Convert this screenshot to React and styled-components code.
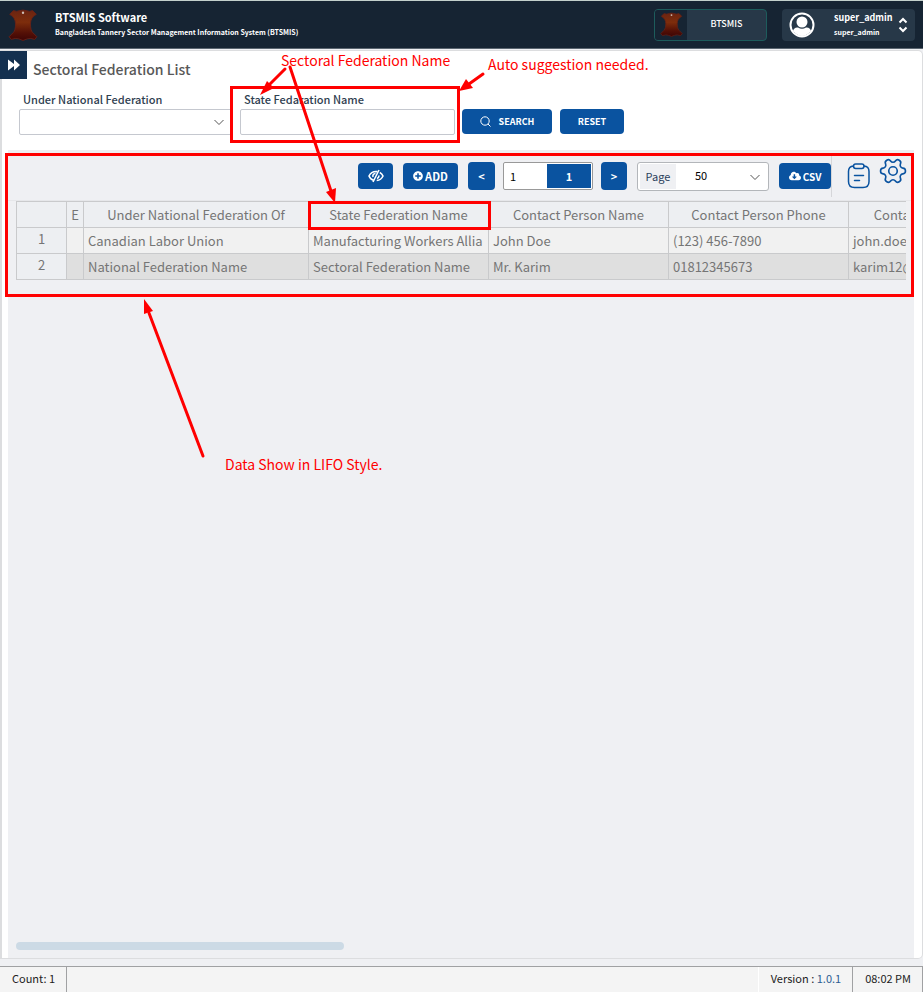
import React from "react";
import styled, { createGlobalStyle } from "styled-components";
import { FaPlusCircle, FaCloudDownloadAlt } from "react-icons/fa";

const BLUE = "#0a53a0";
const RED = "#ff0000";
const SANS = '"Noto Sans CJK SC", "Noto Sans", sans-serif';

const GlobalStyle = createGlobalStyle`
  * { box-sizing: border-box; }
  html, body, #root { height: 100%; }
  body { margin: 0; background: #eff0f3; font-family: ${SANS}; font-size: 12px; line-height: 16px; }
  button, input, select { font-family: inherit; margin: 0; }
`;

const Page = styled.div`
  position: relative;
  display: flex;
  flex-direction: column;
  min-height: 100vh;
  overflow: hidden;
`;

const Header = styled.header`
  display: flex;
  align-items: center;
  height: 49px;
  padding: 0 8px;
  background: #162433;
  border-top: 1px solid #c3d0cc;
  border-bottom: 1px solid #5b6671;
  color: #fff;
`;

const Brand = styled.div`
  display: flex;
  align-items: center;
  gap: 17px;
  flex: 1;
`;

const BrandText = styled.div`
  display: flex;
  flex-direction: column;
  padding-bottom: 2px;
`;

const BrandName = styled.strong`
  font-size: 11px;
  line-height: 16px;
  font-weight: 700;
`;

const BrandNote = styled.span`
  font-size: 7px;
  line-height: 14px;
  font-weight: 700;
`;

const ModuleButton = styled.button`
  display: flex;
  align-items: center;
  width: 113px;
  height: 32px;
  padding: 0;
  border: 1px solid #1d5c5c;
  border-radius: 4px;
  background: #273848;
  color: #fff;
  overflow: hidden;
  font-size: 9px;
  font-weight: 500;
`;

const ModuleIcon = styled.span`
  display: flex;
  align-items: center;
  justify-content: center;
  width: 32px;
  height: 100%;
  background: #162433;
`;

const ModuleName = styled.span`
  flex: 1;
  padding-bottom: 2px;
`;

const UserButton = styled.button`
  display: flex;
  align-items: center;
  width: 133px;
  height: 32px;
  margin-left: 15px;
  padding: 0 7px;
  border: 0;
  border-radius: 4px;
  background: #273848;
  color: #fff;
  text-align: left;
`;

const UserNames = styled.span`
  display: flex;
  flex-direction: column;
  flex: 1;
  margin-left: 19px;
  font-weight: 700;
`;

const UserName = styled.span`
  font-size: 9px;
  line-height: 14px;
`;

const UserRole = styled.span`
  font-size: 7px;
  line-height: 14px;
`;

const Panel = styled.main`
  display: flex;
  flex-direction: column;
  flex: 1;
  margin-top: 1px;
  padding: 0 8px 0 6px;
  border: 1px solid #dcdddf;
  border-left-width: 2px;
  border-radius: 0 5px 5px 0;
  background: #fff;
`;

const TitleRow = styled.div`
  display: flex;
  height: 37px;
  margin-left: -8px;
`;

const MenuToggle = styled.button`
  display: flex;
  align-items: center;
  justify-content: center;
  width: 27px;
  height: 28px;
  padding: 0;
  border: 0;
  background: #14304f;
  color: #fff;
`;

const Title = styled.h1`
  margin: 8px 0 0 6px;
  color: #585858;
  font-size: 14px;
  line-height: 20px;
  font-weight: 500;
`;

const Filters = styled.form`
  display: flex;
  align-items: flex-start;
  height: 62px;
  padding: 3px 0 0 11px;
`;

const Field = styled.div`
  position: relative;
  display: flex;
  flex-direction: column;
  width: ${(p) => p.$width};
  margin-right: ${(p) => p.$gap};
`;

const Label = styled.label`
  padding-left: 4px;
  color: #2f4050;
  font-size: 11px;
  line-height: 16px;
  font-weight: 500;
`;

const controlBox = `
  width: 100%;
  height: 26px;
  margin-top: 2px;
  border: 1px solid #c5c8cf;
  border-radius: 2px;
  background: #fff;
`;

const FilterSelect = styled.select`
  ${controlBox}
  appearance: none;
`;

const FilterInput = styled.input`
  ${controlBox}
`;

const SelectChevron = styled.span`
  position: absolute;
  right: 7px;
  bottom: 8px;
  display: flex;
  pointer-events: none;
`;

const FilterButton = styled.button`
  display: flex;
  align-items: center;
  justify-content: center;
  gap: 8px;
  width: ${(p) => p.$width};
  height: 25px;
  margin: 18px 8px 0 0;
  padding: 0;
  border: 0;
  border-radius: 4px;
  background: ${BLUE};
  color: #fff;
  font-size: 9px;
  font-weight: 700;
`;

const Workspace = styled.section`
  display: flex;
  flex-direction: column;
  flex: 1;
  background: #eff0f3;
`;

const Toolbar = styled.div`
  display: flex;
  align-items: center;
  justify-content: flex-end;
  height: 51px;
  padding: 2px 6px 0 0;
  border-bottom: 1px solid #e6e7ea;
`;

const ToolButton = styled.button`
  display: flex;
  align-items: center;
  justify-content: center;
  gap: 2px;
  width: ${(p) => p.$width};
  height: ${(p) => p.$height || "26px"};
  margin-right: ${(p) => p.$gap};
  padding: 0;
  border: 0;
  border-radius: 4px;
  background: ${BLUE};
  color: #fff;
  font-size: ${(p) => p.$size || "11px"};
  font-weight: 700;
`;

const Pager = styled.div`
  display: flex;
  width: 90px;
  height: 28px;
  margin-right: 8px;
  padding: 1px;
  border: 1px solid #999;
  border-radius: 2px;
  background: #fff;
`;

const PageInput = styled.input`
  width: 42px;
  padding: 0 5px;
  border: 0;
  background: #fff;
  font-size: 11px;
`;

const PageTotal = styled.span`
  flex: 1;
  background: ${BLUE};
  color: #fff;
  font-size: 11px;
  line-height: 24px;
  font-weight: 700;
  text-align: center;
`;

const PageSize = styled.div`
  position: relative;
  display: flex;
  width: 132px;
  height: 29px;
  margin-right: 10px;
  padding: 1px 2px;
  border: 1px solid #b3b6ba;
  border-radius: 3px;
  background: #fff;
`;

const PageSizeLabel = styled.label`
  width: 36px;
  background: #eff0f3;
  color: #2b3f5c;
  font-size: 11px;
  line-height: 24px;
  text-align: center;
`;

const PageSizeSelect = styled.select`
  flex: 1;
  padding: 0 0 2px 19px;
  border: 0;
  background: transparent;
  appearance: none;
  color: #000;
  font-size: 11px;
`;

const IconGroup = styled.div`
  display: flex;
  gap: 7px;
  height: 41px;
  padding-left: 15px;
  border-left: 1px solid #d5d6d9;
`;

const IconButton = styled.button`
  display: flex;
  align-self: ${(p) => p.$align};
  padding: 0;
  border: 0;
  background: none;
`;

const TableArea = styled.div`
  flex: 1;
  margin: 0 8px;
  overflow: hidden;
`;

const Table = styled.table`
  width: 1013px;
  border-collapse: collapse;
  table-layout: fixed;
  color: #757575;
  font-size: 13px;
`;

const Col = styled.col`
  width: ${(p) => p.$width};
`;

const HeadCell = styled.th`
  height: 26px;
  padding: 0;
  border: 1px solid #c9cacc;
  background: #edeff2;
  font-weight: 400;
  line-height: 20px;
  white-space: nowrap;
`;

const RowNumber = styled(HeadCell)`
  padding: 0 0 3px;
`;

const Cell = styled.td`
  height: 26px;
  padding: 0 0 0 4px;
  border: 1px solid #c9cacc;
  background: ${(p) => (p.$shaded ? "#dfdfdf" : "#f1f1f1")};
  line-height: 20px;
  white-space: nowrap;
  overflow: hidden;
`;

const ScrollThumb = styled.div`
  width: 37%;
  max-width: 328px;
  height: 8px;
  margin: 0 8px 8px;
  border-radius: 4px;
  background: #ccdae5;
`;

const Footer = styled.footer`
  display: flex;
  height: 26px;
  margin-top: 7px;
  border-top: 1px solid #a0a1a3;
  background: #f4f4f4;
  color: #222;
  font-size: 11px;
  line-height: 23px;
`;

const FooterItem = styled.div`
  padding: 0 11px 0 12px;
  border-right: 1px solid #a0a1a3;
`;

const FooterSpace = styled.div`
  flex: 1;
  border-right: 1px solid #fff;
`;

const VersionLink = styled.a`
  color: #2c5c92;
  text-decoration: none;
`;

const Mark = styled.div`
  position: absolute;
  left: ${(p) => p.$left};
  top: ${(p) => p.$top};
  right: ${(p) => p.$right || "auto"};
  width: ${(p) => p.$width || "auto"};
  height: ${(p) => p.$height};
  border: 3px solid ${RED};
  pointer-events: none;
`;

const Note = styled.div`
  position: absolute;
  left: ${(p) => p.$left};
  top: ${(p) => p.$top};
  color: ${RED};
  font-size: 14px;
  line-height: 18px;
  white-space: nowrap;
  pointer-events: none;
`;

const Arrows = styled.svg`
  position: absolute;
  left: 0;
  top: 0;
  pointer-events: none;
`;

function Hide({ width, height }) {
  return (
    <svg width={width} height={height} viewBox="0 0 28 30" aria-hidden="true">
      <defs>
        <linearGradient id="hide" x1="0" y1="0" x2="0" y2="1">
          <stop offset="0" stopColor="#6b2411" />
          <stop offset="0.4" stopColor="#7d2d0c" />
          <stop offset="0.75" stopColor="#541006" />
          <stop offset="1" stopColor="#3d0505" />
        </linearGradient>
      </defs>
      <path
        d="M5 1.500 Q8 3 11 1.500 L14 1 L17 1.500 Q20 3 23 1.500 L26.500 5 Q21 8 21 14 Q21 20 23 22 L27 26 L25 28.500 Q21 27 18 28 L14 29.500 L10 28 Q7 27 3 28.500 L1 26 L5 22 Q7 20 7 14 Q7 8 1.500 5 Z"
        fill="url(#hide)" stroke="#6a2116" strokeWidth="0.800" strokeLinejoin="round"
      />
      <circle cx="14" cy="3.500" r="1.100" fill="#cdbdb6" />
    </svg>
  );
}

function DoubleArrow() {
  return (
    <svg width="14" height="12" viewBox="0 0 14 12" fill="currentColor" aria-hidden="true">
      <path d="M1 0.500 7 5V0.500L13 6 7 11.500V7L1 11.500Z" />
    </svg>
  );
}

function Chevron() {
  return (
    <svg width="12" height="10" viewBox="0 0 12 10" fill="none" stroke="#555" aria-hidden="true">
      <path d="M1.500 3 6 7.500 10.500 3" />
    </svg>
  );
}

function Avatar() {
  return (
    <svg width="26" height="26" viewBox="0 0 26 26" aria-hidden="true">
      <circle cx="13" cy="13" r="11.500" fill="#273848" stroke="#fff" strokeWidth="2" />
      <circle cx="13" cy="10" r="5.500" fill="#fff" />
      <path d="M4 19 Q5 15 9 15.500 Q13 18 17 15.500 Q21 15 22 19 Q13 29 4 19Z" fill="#fff" />
    </svg>
  );
}

function UpDown() {
  return (
    <svg width="10" height="16" viewBox="0 0 10 16" fill="none" stroke="#fff" strokeWidth="2" aria-hidden="true">
      <path d="M1.500 5.500 5 2 8.500 5.500M1.500 10.500 5 14 8.500 10.500" />
    </svg>
  );
}

function Magnifier() {
  return (
    <svg width="11" height="11" viewBox="0 0 11 11" fill="none" stroke="#fff" aria-hidden="true">
      <circle cx="5" cy="5" r="4.200" />
      <path d="M8 8 10.500 10.500" />
    </svg>
  );
}

function EyeOff() {
  return (
    <svg width="16" height="14" viewBox="0 0 16 14" fill="none" stroke="#fff" strokeWidth="1.600" aria-hidden="true">
      <path d="M6 11.500C3.500 10.800 1.800 9 1 7 2.500 4 5 2.500 8 2.500L9.500 2.600M11.800 3.500C13.300 4.300 14.400 5.600 15 7 13.800 9.700 11.500 11.300 8.700 11.500" />
      <path d="M11 1 5 13" />
      <path d="M7.500 4.500C5.500 4.700 4.500 6 5 8M11 6.500C11 8 10.300 9 9 9.500" />
    </svg>
  );
}

function ClipboardIcon() {
  return (
    <svg width="24" height="26" viewBox="0 0 24 26" fill="none" stroke={BLUE} strokeWidth="1.500" strokeLinecap="round" aria-hidden="true">
      <path d="M6.500 3C3 3.300 1.500 5 1.500 8.500V18.500C1.500 22.500 3.200 24.500 7.500 24.500H16C20.300 24.500 22 22.500 22 18.500V8.500C22 5 20.500 3.300 17 3" />
      <rect x="6.500" y="1" width="10.500" height="4.500" rx="2.200" />
      <path d="M7.500 12.500H16.500M7.500 17.500H12.500" />
    </svg>
  );
}

function GearIcon() {
  return (
    <svg width="30" height="30" viewBox="0 0 24 24" fill="none" stroke={BLUE} strokeWidth="1.300" strokeLinejoin="round" aria-hidden="true">
      <g transform="rotate(30 12 12)">
        <path d="M9.671 4.136a2.340 2.340 0 0 1 4.659 0 2.340 2.340 0 0 0 3.319 1.915 2.340 2.340 0 0 1 2.330 4.033 2.340 2.340 0 0 0 0 3.831 2.340 2.340 0 0 1-2.330 4.033 2.340 2.340 0 0 0-3.319 1.915 2.340 2.340 0 0 1-4.659 0 2.340 2.340 0 0 0-3.320-1.915 2.340 2.340 0 0 1-2.330-4.033 2.340 2.340 0 0 0 0-3.831A2.340 2.340 0 0 1 6.350 6.051a2.340 2.340 0 0 0 3.319-1.915" />
      </g>
      <circle cx="12" cy="12" r="3.400" />
    </svg>
  );
}

const columns = [
  { name: "", width: "50px" },
  { name: "E", width: "17px" },
  { name: "Under National Federation Of", width: "225px" },
  { name: "State Federation Name", width: "180px" },
  { name: "Contact Person Name", width: "180px" },
  { name: "Contact Person Phone", width: "180px" },
  { name: "Contact Person Email", width: "180px" },
];

const rows = [
  ["", "Canadian Labor Union", "Manufacturing Workers Allia", "John Doe", "(123) 456-7890", "john.doe@example.com"],
  ["", "National Federation Name", "Sectoral Federation Name", "Mr. Karim", "01812345673", "karim12@gmail.com"],
];

export default function App() {
  return (
    <Page>
      <GlobalStyle />
      <Header>
        <Brand>
          <Hide width={30} height={32} />
          <BrandText>
            <BrandName>BTSMIS Software</BrandName>
            <BrandNote>Bangladesh Tannery Sector Management Information System (BTSMIS)</BrandNote>
          </BrandText>
        </Brand>
        <ModuleButton type="button">
          <ModuleIcon><Hide width={23} height={25} /></ModuleIcon>
          <ModuleName>BTSMIS</ModuleName>
        </ModuleButton>
        <UserButton type="button">
          <Avatar />
          <UserNames>
            <UserName>super_admin</UserName>
            <UserRole>super_admin</UserRole>
          </UserNames>
          <UpDown />
        </UserButton>
      </Header>

      <Panel>
        <TitleRow>
          <MenuToggle type="button" aria-label="Open menu"><DoubleArrow /></MenuToggle>
          <Title>Sectoral Federation List</Title>
        </TitleRow>
        <Filters onSubmit={(e) => e.preventDefault()}>
          <Field $width="213px" $gap="8px">
            <Label htmlFor="national">Under National Federation</Label>
            <FilterSelect id="national" />
            <SelectChevron><Chevron /></SelectChevron>
          </Field>
          <Field $width="215px" $gap="7px">
            <Label htmlFor="state">State Fedaration Name</Label>
            <FilterInput id="state" type="text" />
          </Field>
          <FilterButton type="submit" $width="90px"><Magnifier />SEARCH</FilterButton>
          <FilterButton type="reset" $width="64px">RESET</FilterButton>
        </Filters>

        <Workspace>
          <Toolbar>
            <ToolButton type="button" $width="35px" $gap="10px" aria-label="Toggle columns"><EyeOff /></ToolButton>
            <ToolButton type="button" $width="55px" $gap="10px"><FaPlusCircle size={10} />ADD</ToolButton>
            <ToolButton type="button" $width="27px" $height="28px" $gap="8px">&lt;</ToolButton>
            <Pager>
              <PageInput type="text" defaultValue="1" aria-label="Page number" />
              <PageTotal>1</PageTotal>
            </Pager>
            <ToolButton type="button" $width="26px" $height="28px" $gap="10px">&gt;</ToolButton>
            <PageSize>
              <PageSizeLabel htmlFor="page-size">Page</PageSizeLabel>
              <PageSizeSelect id="page-size" defaultValue="50">
                <option>50</option>
                <option>100</option>
              </PageSizeSelect>
              <SelectChevron><Chevron /></SelectChevron>
            </PageSize>
            <ToolButton type="button" $width="52px" $gap="0px" $size="10px"><FaCloudDownloadAlt size={12} />CSV</ToolButton>
            <IconGroup>
              <IconButton type="button" $align="center" aria-label="Report"><ClipboardIcon /></IconButton>
              <IconButton type="button" $align="flex-start" aria-label="Settings"><GearIcon /></IconButton>
            </IconGroup>
          </Toolbar>
          <TableArea>
            <Table>
              <colgroup>
                {columns.map((c) => <Col key={c.name} $width={c.width} />)}
              </colgroup>
              <thead>
                <tr>{columns.map((c) => <HeadCell key={c.name} scope="col">{c.name}</HeadCell>)}</tr>
              </thead>
              <tbody>
                {rows.map((row, i) => (
                  <tr key={row[1]}>
                    <RowNumber scope="row">{i + 1}</RowNumber>
                    {row.map((text, j) => <Cell key={j} $shaded={i % 2 === 1}>{text}</Cell>)}
                  </tr>
                ))}
              </tbody>
            </Table>
          </TableArea>
          <ScrollThumb />
        </Workspace>
      </Panel>

      <Footer>
        <FooterItem>Count: 1</FooterItem>
        <FooterSpace />
        <FooterItem>Version : <VersionLink href="#version">1.0.1</VersionLink></FooterItem>
        <FooterItem>08:02 PM</FooterItem>
      </Footer>

      <Mark $left="230px" $top="86px" $width="230px" $height="57px" />
      <Mark $left="5px" $top="153px" $right="9px" $height="144px" />
      <Mark $left="308px" $top="201px" $width="183px" $height="29px" />
      <Arrows width="500" height="470" viewBox="0 0 500 470" fill={RED} stroke={RED} aria-hidden="true">
        <g strokeWidth="3" strokeLinecap="round">
          <path d="M285 69 268 86" />
          <path d="M290 67 331 191" />
          <path d="M483 74 469 84" />
          <path d="M203 456 149 313" />
        </g>
        <g stroke="none">
          <path d="M260 95 267 81 274 88Z" />
          <path d="M335 203 326 192 336 188Z" />
          <path d="M459 91 466 79 473 88Z" />
          <path d="M144 299 144 314 153 311Z" />
        </g>
      </Arrows>
      <Note $left="281px" $top="51px">Sectoral Federation Name</Note>
      <Note $left="488px" $top="55px">Auto suggestion needed.</Note>
      <Note $left="225px" $top="455px">Data Show in LIFO Style.</Note>
    </Page>
  );
}
